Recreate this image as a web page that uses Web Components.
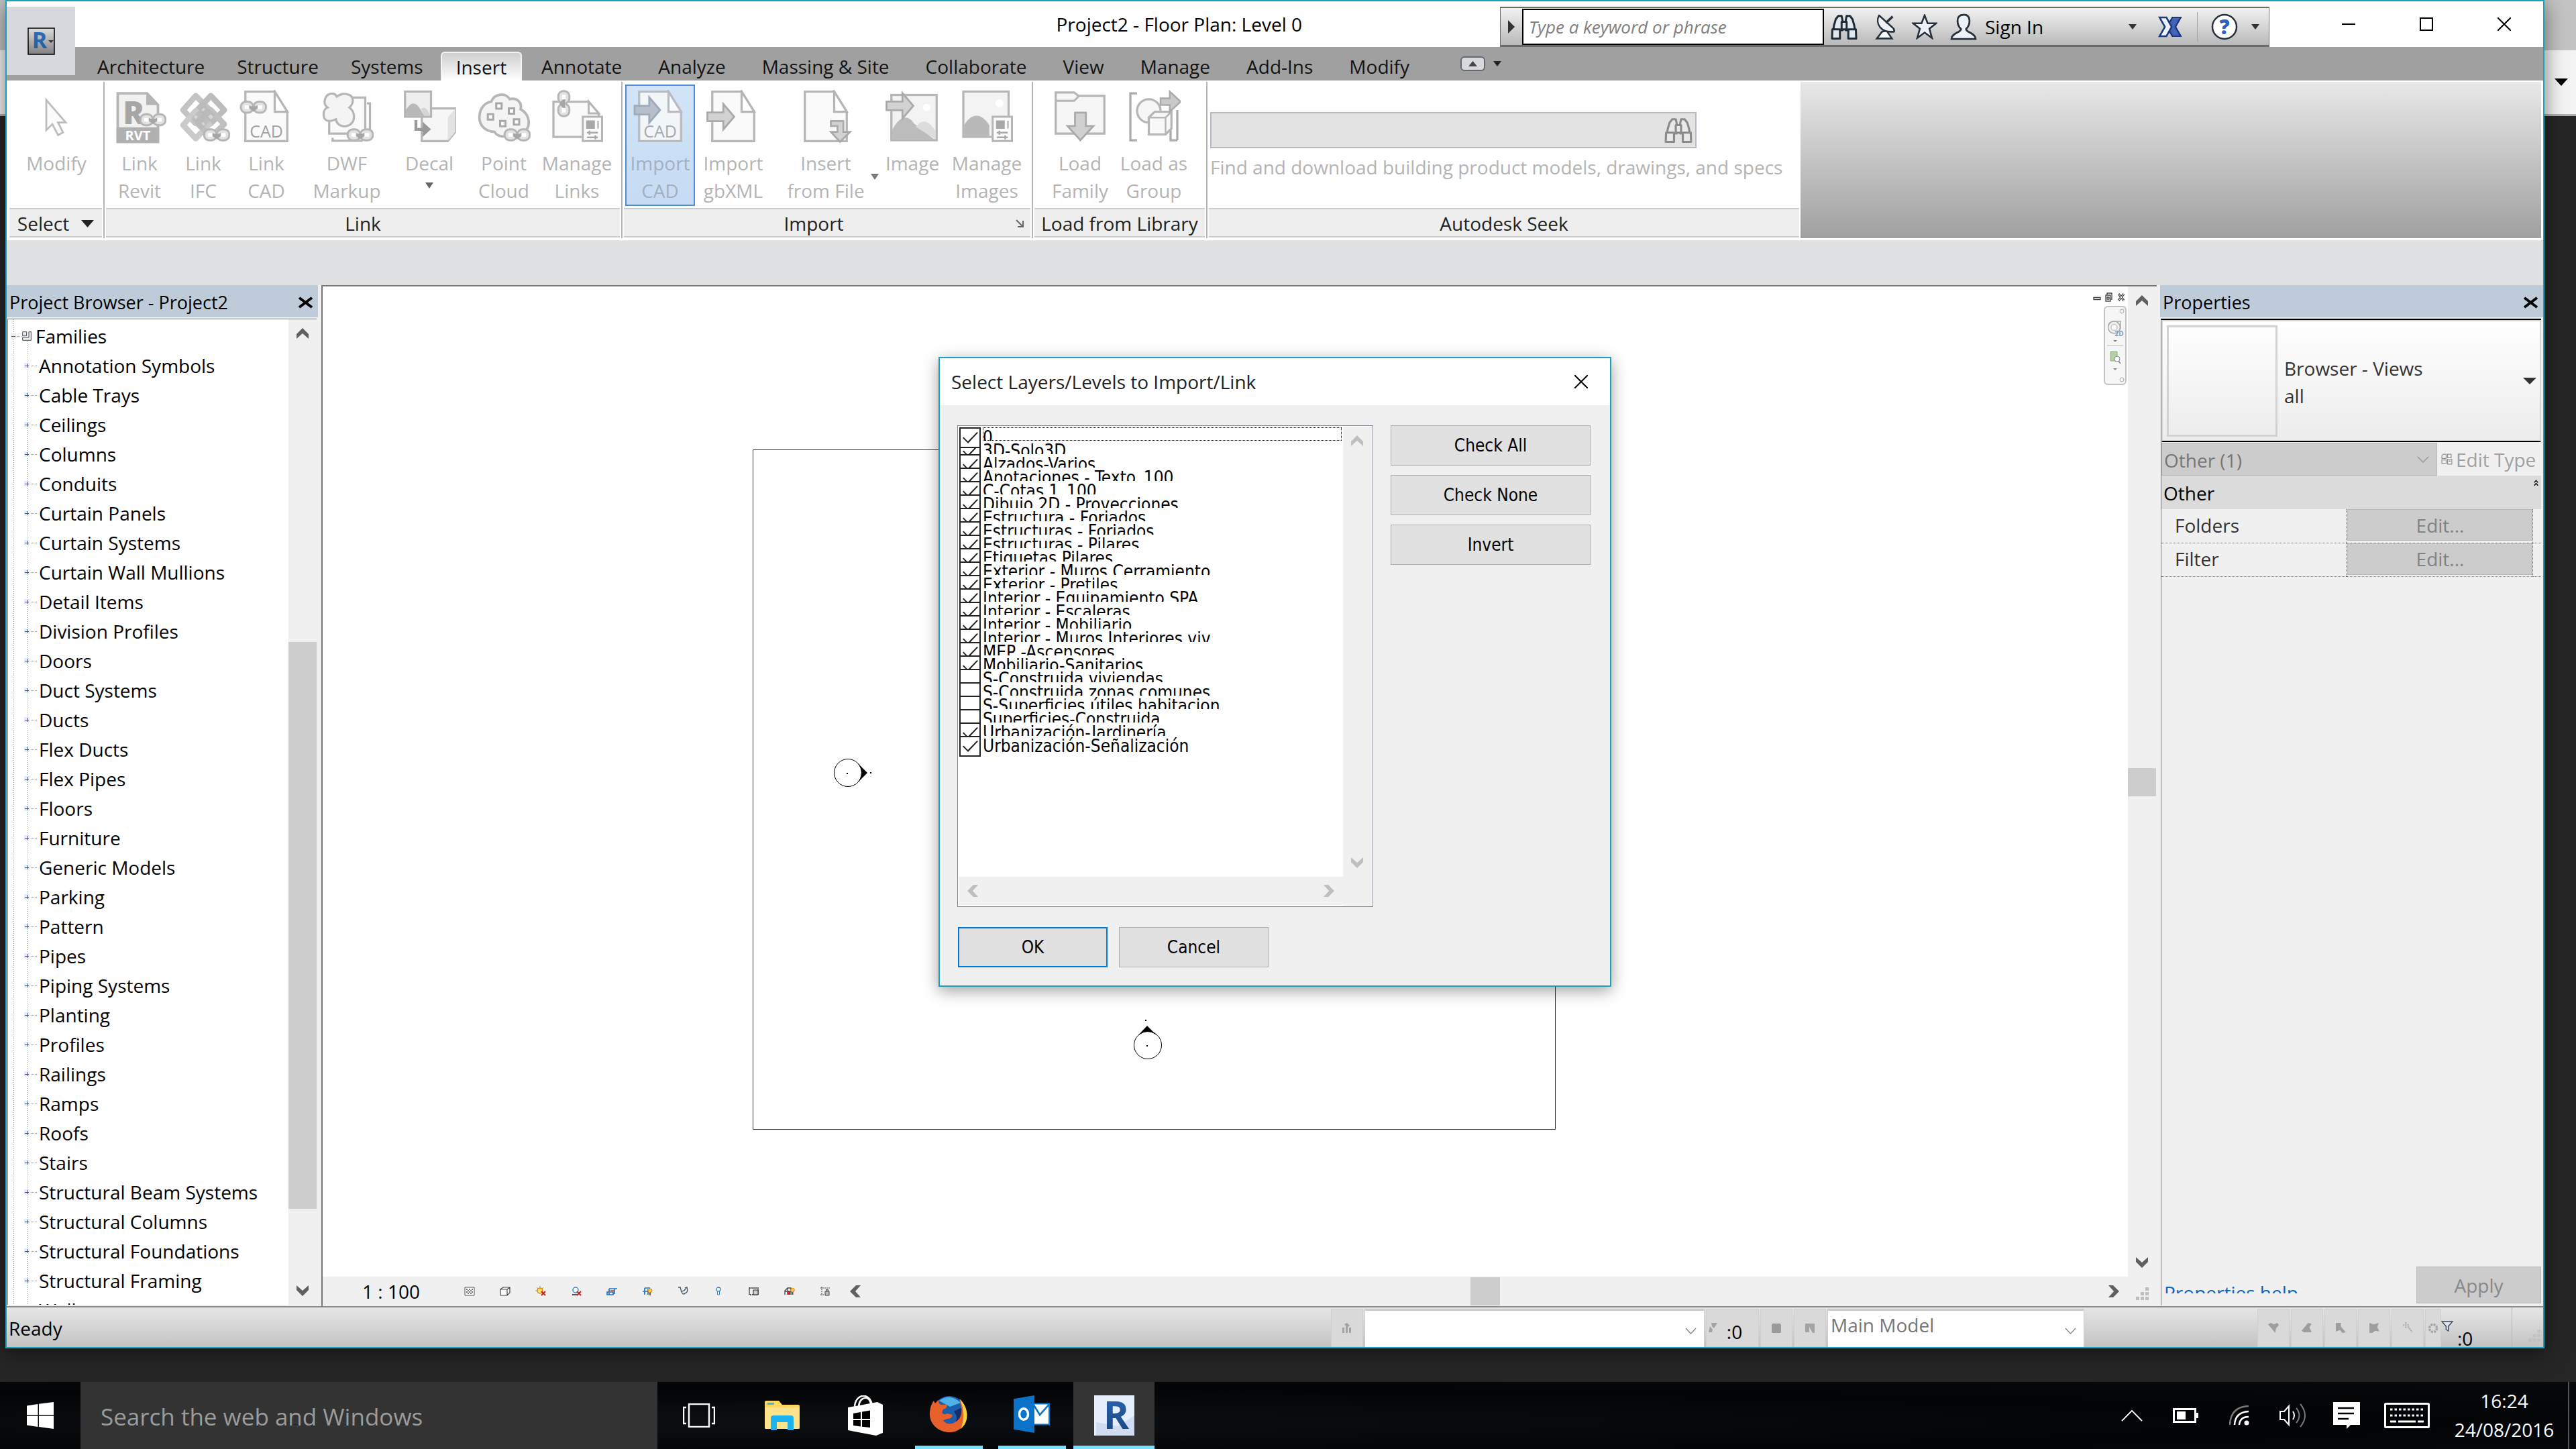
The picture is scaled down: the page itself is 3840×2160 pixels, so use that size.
<!DOCTYPE html>
<html lang="en">
<head>
<meta charset="utf-8">
<title>Project2 - Floor Plan: Level 0</title>
<style>
html,body{margin:0;height:100%}
body{font-family:"Open Sans","Noto Sans",sans-serif;font-size:28px;line-height:40px;color:#000;overflow:hidden;background:#262626}
</style>
</head>
<body>
<desk-top></desk-top>
<script>
const BASE=`*{box-sizing:border-box}:host{display:block;box-sizing:border-box}button,input,select{font:inherit;color:inherit;margin:0;padding:0;border:0;background:none;border-radius:0}svg{display:block}`;
function define(tag,css,html){
  customElements.define(tag,class extends HTMLElement{
    connectedCallback(){
      if(this.shadowRoot)return;
      const t=document.createElement('template');
      t.innerHTML=`<style>${BASE}${css}</style>`+(typeof html==='function'?html(this):html);
      this.attachShadow({mode:'open'}).append(t.content.cloneNode(true));
    }
  });
}

/* ---- icon library ---- */
const G='#b6b6b6';
const chain=(x,y,r='')=>`<g transform="translate(${x} ${y}) ${r}"><rect x="0" y="0" width="7.4" height="6.6" rx="3" fill="#e2e2e2" stroke="${G}" stroke-width="1.2"/><rect x="7.6" y="0" width="7.4" height="6.6" rx="3" fill="#e2e2e2" stroke="${G}" stroke-width="1.2"/><rect x="2.2" y="2.2" width="2.8" height="2.200" fill="#fff"/><rect x="10" y="2.2" width="2.8" height="2.200" fill="#fff"/><path d="M5 2.200q2.500 1.200 5 0v1.800l-2.500 2-2.500-2z" fill="#a6a6a6"/></g>`;
const page=`<path d="M3.5 1h17.500l7.500 12V30.500H3.5z" fill="#fafafa" stroke="${G}" stroke-width="1.3"/><path d="M21 1v12H28.500z" fill="#fff" stroke="${G}" stroke-width="1.3"/>`;
const cad=`<text x="16" y="28.500" font-family="Open Sans" font-size="10" font-weight="400" text-anchor="middle" fill="#a2a2a2">CAD</text>`;
const arrowR=(x,y)=>`<path d="M${x} ${y-2.6}h9.5v-5l6.500 7.600-6.500 7.600v-5H${x}z" fill="#d2d2d2" stroke="#aaa" stroke-width="1.1"/>`;
const sheet=`<rect x="19.500" y="16" width="11.500" height="14.500" fill="#fafafa" stroke="${G}" stroke-width="1.2"/><rect x="21.500" y="18.200" width="5.200" height="5" fill="#a8a8a8"/><path d="M28.600 18.400v4.600" stroke="#bbb"/><path d="M22 25.500h6.500M22 28.300h6.500M23.500 24.300v2.400M27 27.100v2.400" stroke="#a8a8a8" stroke-width="1"/>`;
const rlogo=(id,a,b)=>`<defs><linearGradient id="${id}" x1="0" y1="0" x2="0" y2="1"><stop offset="0" stop-color="${a}"/><stop offset="1" stop-color="${b}"/></linearGradient></defs>`;
const binoc=(s,f)=>`<g fill="${f}" stroke="${s}" stroke-width="1.2" stroke-linejoin="round"><path d="M2 7 3 3.500 4.500 1.500h2L7 4v6H1.500zM9 4l.5-2.500h2L13 3.500 14 7l.5 3H9z"/><path d="M1 9.500h4.500v5.500H.8zM10.500 9.500H15l.2 5.500h-4.700z"/><path d="M6.500 5h3v4.500h-3z"/></g>`;
const ICONS={
 cursor:['0 0 32 32',`<path d="M10 6v18l3.600-3.600L17 27l3-1.600-3-6h4.600z" fill="#fbfbfb" stroke="#bdbdbd" stroke-width="1.100"/>`],
 revit:['0 0 32 32',`<path d="M3 2h17.500l6.500 7v22H3z" fill="#f1f1f1" stroke="${G}" stroke-width="1.500"/><path d="M20 1.500v7.500H27.500z" fill="#b4b4b4"/><text x="12.500" y="20.500" font-family="Open Sans" font-size="19" font-weight="800" text-anchor="middle" fill="#a6a6a6">R</text><rect x="2.300" y="22.300" width="25.400" height="9" fill="#b0b0b0"/><text x="15" y="29.800" font-family="Open Sans" font-size="8" font-weight="700" text-anchor="middle" fill="#fff">RVT</text>${chain(16.500,14.500)}`],
 ifc:['0 0 32 32',`<g fill="none" stroke="#c3c3c3" stroke-width="3.400" stroke-linejoin="round"><path d="M11.500 3.500l8 8-8 8.500L4 12z"/><path d="M20.500 3.500l8 8.500-8 8-8-8z" stroke="#bcbcbc"/><path d="M11.500 12.500l8 8-8 8.500-7.500-8z" stroke="#cacaca"/><path d="M20.500 12l8 8.500-8 7.500-8-8z" stroke="#c0c0c0"/></g><path d="M9 17l8-8 6 6-8 9z" fill="#b4b4b4" opacity=".55"/>${chain(16.500,23.500)}`],
 linkcad:['0 0 32 32',page+cad+chain(.800,7)],
 dwf:['0 0 32 32',`<path d="M7.500 28.500v1.800h18M28 8h1.800v19" fill="none" stroke="${G}" stroke-width="1.300"/><path d="M5.500 4.500h21.500v21.500H5.500z" fill="#fafafa" stroke="${G}" stroke-width="1.300"/><path d="M10 4C9 1.500 4.500 1.500 3.200 5c-1 2.600 0 4.500 1.300 5.500C1.500 11.500 1 18 5 18.500c2 .4 3-.5 4.500-1C10 22.500 18 23.500 20 18c1-4-.5-6-2.500-7.500C20.500 8 20 4 17.500 3 14.500 1.800 12 2.500 10 4z" fill="#f4f4f4" stroke="${G}" stroke-width="1.300"/>${chain(16.500,23.500)}`],
 decal:['0 0 32 32',`<path d="M11.500 16.500V11h20v14L27 30.500H11.500z" fill="#f6f6f6" stroke="${G}" stroke-width="1.300"/><path d="M27 16.500v14l4.500-5.500V11z" fill="#e2e2e2"/><rect x="1.500" y="1" width="15.500" height="15" fill="#eee" stroke="${G}" stroke-width="1.300"/><path d="M2 15.500V12q4-7 8-1.500l3 5z" fill="#b9b9b9"/><path d="M11 11.500q3-3 5.500 4H13z" fill="#d5d5d5"/><path d="M8 18v5.500h6" fill="none" stroke="#999" stroke-width="1.700"/><path d="M12 19l5 4.500-5 4.500z" fill="#999"/>`],
 cloud:['0 0 32 32',`<path d="M8.500 7c2-5 9-5.500 11-1.500 4.500-1 7.500 2 6.500 6 4.500 2.500 6 7.500 4 11.500-2 4-7 5-10 3.500-3.500 2-8 1.500-9.500-1.500C5 25 1 21 1.500 15.500 1.800 10.500 5 7.500 8.500 7z" fill="#f4f4f4" stroke="${G}" stroke-width="1.500"/><g fill="#fff" stroke="#a8a8a8" stroke-width="1.200"><rect x="11.500" y="8" width="3.200" height="3.200"/><rect x="19" y="11" width="3.200" height="3.200"/><rect x="6.500" y="14.500" width="3.200" height="3.200"/><rect x="13.800" y="18.500" width="3.200" height="3.200"/><rect x="22" y="17.500" width="3.200" height="3.200"/></g>${chain(16.500,23.500)}`],
 mlinks:['0 0 32 32',`<path d="M2 7h21l6 7v14H2z" fill="#fafafa" stroke="${G}" stroke-width="1.300"/><path d="M23 7v7h6z" fill="#fff" stroke="${G}" stroke-width="1.200"/>${chain(11.500,.700,'rotate(90)')}${sheet}`],
 importcad:['0 0 32 32',`<g opacity=".85">${page}${cad}</g><path d="M.8 9.400h8.700V4.400l6.500 7.600-6.500 7.600v-5H.8z" fill="#b6bfca" stroke="#9daab9" stroke-width="1.100"/>`],
 gbxml:['0 0 32 32',page+arrowR(.600,16)],
 insfile:['0 0 32 32',page+`<path d="M19 18.500h7.500v6.500h4L24.500 31l-5.500-6h4v-3.500H19z" fill="#d2d2d2" stroke="#aaa" stroke-width="1.100"/>`],
 image:['0 0 32 32',`<rect x="3.500" y="3" width="27" height="27" fill="#f3f3f3" stroke="${G}" stroke-width="1.300"/><path d="M4 29.500V24c4-8 9-10 13-4l12 9.500z" fill="#bcbcbc"/><path d="M18 22c4-5 8-4 12 3v4.500z" fill="#dcdcdc"/><circle cx="24.500" cy="10.500" r="2.200" fill="#fff"/>${arrowR(.600,9.500)}`],
 mimages:['0 0 32 32',`<rect x="2" y="1" width="27" height="27" fill="#f3f3f3" stroke="${G}" stroke-width="1.300"/><path d="M2.500 27.500V21c4-7 10-8 15 0v6.500z" fill="#b9b9b9"/><circle cx="23.500" cy="8" r="2.400" fill="#fff"/>${sheet}`],
 lfamily:['0 0 32 32',`<path d="M1.500 1.500h11l2.500 2h15.500V26H1.500z" fill="#f6f6f6" stroke="${G}" stroke-width="1.300"/><path d="M1.500 6.500h11l3-3" fill="none" stroke="${G}" stroke-width="1.200"/><path d="M13 13.500h6.500v8H24L16.200 30 8.500 21.500H13z" fill="#d0d0d0" stroke="#aaa" stroke-width="1.100"/>`],
 lgroup:['0 0 32 32',`<path d="M6 2H2v28h4M26 18v12h4M30 12v18" fill="none" stroke="#ababab" stroke-width="1.300"/><circle cx="13" cy="12.500" r="7" fill="#f6f6f6" stroke="${G}" stroke-width="1.300"/><path d="M13 16.500l3.500-3.500h10v10l-3.500 3.500H13z" fill="#f8f8f8" stroke="${G}" stroke-width="1.300"/><path d="M13 16.500h10v10M23 16.500l3.500-3.500" fill="none" stroke="${G}"/><path d="M20 5h5.500V1l6.500 6-6.500 6V9H20z" fill="#c9c9c9" stroke="#aaa"/>`],
 down:['0 0 10 8',`<path d="M0 0h10L5 8z" fill="currentColor"/>`],
 right:['0 0 8 16',`<path d="M0 0l8 8-8 8z" fill="currentColor"/>`],
 launch:['0 0 12 12',`<path d="M1 1l9 9M11 2v9H3" fill="none" stroke="#666" stroke-width="2"/>`],
 binoc:['0 0 16 16',binoc('#1f2c38','#e3e8ee')],
 binocg:['0 0 16 16',binoc('#8b8b8b','#e9e9e9')],
 dish:['0 0 16 16',`<path d="M6.500 11l-3.500 4.300h10L9.500 10.500z" fill="#fff" stroke="#27323d" stroke-width="1.100"/><path d="M4.500.800C1.500 6 6 12 14.500 11q.3-1.500-1-2.500z" fill="#eef1f6" stroke="#27323d" stroke-width="1.100" stroke-linejoin="round"/><path d="M9 5.500l4.500-4" stroke="#27323d" stroke-width="1.500"/>`],
 star:['0 0 16 16',`<path d="M8 .8l1.900 5h5.300l-4.200 3.400 1.600 5.800L8 11.600 3.400 15 5 9.200.8 5.800h5.300z" fill="#eef1f6" stroke="#27323d" stroke-width="1.100"/>`],
 person:['0 0 16 16',`<path d="M8 .800c-5 0-4 6.200-1.500 8.500C6.500 11.500 1 11.500.800 15.200h14.400C15 11.500 9.500 11.500 9.500 9.300 12 7 13 .800 8 .800z" fill="#eef1f8" stroke="#27323d" stroke-width="1.100"/>`],
 exch:['0 0 16 16',`<path d="M9.500 1H15l-3.500 7L15 15H9.500L6 8z" fill="#4464b8" stroke="#1b3a80" stroke-width="1.100"/><path d="M1 1h4.500L9 8l-3.500 7H1l3.500-7z" fill="#eef2fb" stroke="#1b3a80" stroke-width="1.200"/>`],
 help:['0 0 16 16',`<circle cx="8" cy="8" r="7.200" fill="#fff" stroke="#27323d" stroke-width="1"/><text x="8" y="12.300" font-family="Open Sans" font-size="12" font-weight="800" text-anchor="middle" fill="#2b5fc0">?</text>`],
 min:['0 0 20 20',`<path d="M0 10h20" stroke="#000" stroke-width="2"/>`],
 max:['0 0 20 20',`<path d="M1 1h18v18H1z" fill="none" stroke="#000" stroke-width="2"/>`],
 x:['0 0 20 20',`<path d="M0 0l20 20M20 0L0 20" stroke="#000" stroke-width="2"/>`],
 xb:['0 0 20 20',`<path d="M1 2l18 16M19 2L1 18" stroke="#000" stroke-width="4"/>`],
 toggle:['0 0 37 22',`<rect x="1" y="1" width="35" height="20" rx="5" fill="#d8dade" stroke="#666a70" stroke-width="2"/><path d="M12 15l6.500-8 6.500 8z" fill="#444"/>`],
 cu:['0 0 18 16',`<path d="M0 9 9 0l9 9v7L9 8l-9 8z" fill="currentColor"/>`],
 cd:['0 0 18 16',`<path d="M0 7l9 9 9-9V0L9 8 0 0z" fill="currentColor"/>`],
 cl:['0 0 16 18',`<path d="M9 0 0 9l9 9h7L8 9l8-9z" fill="currentColor"/>`],
 cr:['0 0 16 18',`<path d="M7 0l9 9-9 9H0l8-9-8-9z" fill="currentColor"/>`],
 thin:['0 0 18 10',`<path d="M1 1l8 8 8-8" fill="none" stroke="currentColor" stroke-width="1.500"/>`],
 fam:['0 0 14 14',`<path d="M.700.700h6v6h-6zM.700 9v4.300h12.600V.700H10v8.300z" fill="#eee" stroke="#444a55" stroke-width="1"/>`],
 grip:['0 0 20 20',`<path d="M14 0h5v5h-5zM7 7h5v5H7zM14 7h5v5h-5zM0 14h5v5H0zM7 14h5v5H7zM14 14h5v5h-5z" fill="#bdbdbd"/>`],
 v1:['0 0 16 16',`<path d="M1 2h14v12H1z" fill="#fff" stroke="#555"/><path d="M3 4h2v2H3zM7 4h2v2H7zM11 4h2v2h-2zM5 6h2v2H5zM9 6h2v2H9zM3 8h2v2H3zM7 8h2v2H7zM11 8h2v2h-2zM5 10h2v2H5zM9 10h2v2H9z" fill="#777"/>`],
 v2:['0 0 16 16',`<path d="M1 5l4-3h10v8l-4 4H1zM1 5h10v9M11 5l4-3" fill="#fff" stroke="#444" stroke-width="1.200"/>`],
 v3:['0 0 16 16',`<circle cx="7" cy="7" r="4" fill="#ffe07a" stroke="#d98a00" stroke-width="1.500"/><path d="M7 0v2M0 7h2M2 2l2 2M12 2l-2 2" stroke="#d98a00"/><path d="M9 8l6 6M15 8l-6 6" stroke="#c3271d" stroke-width="2"/>`],
 v4:['0 0 16 16',`<circle cx="7" cy="6" r="4" fill="#fff" stroke="#3b85cf" stroke-width="1.500"/><path d="M2 13h7" stroke="#555" stroke-width="2"/><path d="M9 8l6 6M15 8l-6 6" stroke="#c3271d" stroke-width="2"/>`],
 v5:['0 0 16 16',`<path d="M1 9h9v4H1zM4 4h12M4 4v9M12 4v8" fill="none" stroke="#2172c4" stroke-width="1.700"/><path d="M6 7h5" stroke="#c3271d" stroke-width="1.500"/>`],
 v6:['0 0 16 16',`<path d="M1 8h8M4 3h8M4 3v10M9 5v8" fill="none" stroke="#2172c4" stroke-width="1.700"/><circle cx="12" cy="7" r="3" fill="#ffc94d" stroke="#d98a00"/><path d="M12 10v4" stroke="#555" stroke-width="2"/>`],
 v7:['0 0 16 16',`<path d="M1 2h3l2 7M6 9q3 5 5 2 3-1 4-4l-1-5-3 1M6 8l4-1 2-3" fill="none" stroke="#4a5a6a" stroke-width="1.400"/>`],
 v8:['0 0 16 16',`<circle cx="8" cy="5" r="3" fill="#fff" stroke="#2d7fd0" stroke-width="1.300"/><path d="M6.500 8h3v5h-3z" fill="#fff" stroke="#2d7fd0"/>`],
 v9:['0 0 16 16',`<path d="M1 3h13v10H1z" fill="none" stroke="#222" stroke-width="1.500" stroke-dasharray="2 1"/><path d="M7 6h7v7H7z" fill="#ccc" stroke="#222"/>`],
 v10:['0 0 16 16',`<path d="M1 13V7l4-4h5v10M5 3v10M1 8h9" fill="none" stroke="#444" stroke-width="1.300"/><path d="M5 8h4v5H5z" fill="#c3271d"/><circle cx="12.500" cy="6" r="2.800" fill="#ffc94d" stroke="#d98a00"/><path d="M12.500 9v4" stroke="#555" stroke-width="2"/>`],
 v11:['0 0 16 16',`<path d="M1 3h14M3 1v13M1 13h6" fill="none" stroke="#444" stroke-dasharray="2 1"/><path d="M8 8h6v6H8zM9.500 8V5.500h3V8" fill="#bbb" stroke="#444"/>`],
 s0:['0 0 16 16',`<path d="M1 7h3v8H1zM6 4h3v11H6zM11 7h3v8h-3zM4 2l4-2 4 4-4 3z" fill="#a3a3a3"/>`],
 s1:['0 0 16 16',`<path d="M5 1h9l-5 8-3-3zM1 15l2-9 4 5-1 4z" fill="#a3a3a3"/>`],
 s2:['0 0 16 16',`<rect x="1" y="1" width="14" height="14" rx="2" fill="#9a9a9a"/>`],
 s3:['0 0 16 16',`<path d="M1 1h14v14h-3L7 6v8H1z" fill="#a3a3a3"/>`],
 f1:['0 0 16 16',`<path d="M0 3l4-2 4 2 5-2 2 3-4 5-1 6-4-5z" fill="#9e9e9e"/>`],
 f2:['0 0 16 16',`<path d="M0 12l9-11 5 1-3 5 3 7H3z" fill="#9e9e9e"/>`],
 f3:['0 0 16 16',`<path d="M1 1h7v5l7 8-5 1-3-4-6 2z" fill="#9e9e9e"/>`],
 f4:['0 0 16 16',`<path d="M1 1l6 2 7-2-2 6 3 6-6-1-4 3H1z" fill="#9e9e9e"/>`],
 f5:['0 0 16 16',`<path d="M1 4h8M5 0v8M8 6l6 8" fill="none" stroke="#a8a8a8" stroke-width="2" stroke-dasharray="2 1"/>`],
 f6:['0 0 16 16',`<circle cx="8" cy="8" r="5.500" fill="none" stroke="#a5a5a5" stroke-width="3.500" stroke-dasharray="3 1.300"/>`],
 funnel:['0 0 16 16',`<path d="M1 1h14L9.500 8v7L6.500 13V8z" fill="#dfe6f2" stroke="#3c4656" stroke-width="1.300"/>`],
 et:['0 0 16 16',`<path d="M1 3l2-2h4v6H1zM9 1h5v5H9zM1 9h6v5H1zM9 8h6v7H9z" fill="none" stroke="#8f8f8f" stroke-width="1.100"/><path d="M10.500 10h3v1.500h-3z" fill="#8f8f8f"/>`],
 dbl:['0 0 10 16',`<path d="M1 7l4-5 4 5M1 14l4-5 4 5" fill="none" stroke="#000" stroke-width="2"/>`],
 win:['0 0 40 40',`<path d="M0 5.500 16.500 3v16.300H0zM18 2.800 40 0v19.300H18zM0 20.700h16.500V37L0 34.500zM18 20.700h22V40l-22-3z" fill="#fff"/>`],
 task:['0 0 48 36',`<path d="M9 1h30v34H9zM5 6H1v24h4M43 6h4v24h-4" fill="none" stroke="#fff" stroke-width="2.400"/>`],
 folder:['0 0 52 44',`<path d="M0 2q0-2 2-2h19l5 6h24q2 0 2 2v32q0 2-2 2H2q-2 0-2-2z" fill="#ffd75e"/><path d="M0 10h52v30q0 2-2 2H2q-2 0-2-2z" fill="#ffe38a"/><path d="M4 3h10v3H4z" fill="#3fb8e8"/><path d="M9 44V26q0-4 4-4h26q4 0 4 4v18h-9V32H18v12z" fill="#1cb4f0"/>`],
 store:['0 0 52 60',`<path d="M10 18C10-2 32-6 36 14M16 17C17 0 34 0 34 14" fill="none" stroke="#fff" stroke-width="2.500"/><path d="M0 18l44-8 8 4v42l-10 4-42-8z" fill="#fff"/><path d="M8 27l11-2v10H8zM21 24.600 33 22.500V35H21zM8 37h11v9.500L8 45zM21 37h12v11l-12-1.300z" fill="#000"/>`],
 ff:['0 0 56 56',`<circle cx="29" cy="26" r="25" fill="#1a5fae"/><path d="M14 8q16-12 32 3l-16 6z" fill="#4fb3ea"/><path d="M36 24q10 12-4 24l16-8V18z" fill="#1b2b66"/><path d="M44 8c16 14 14 38-4 45C22 60 0 48 0 28 0 18 3 12 6 8l2 4 5-5q0 6 4 7l8 0q2 5-5 7l-2 5q4 4 8 1l8 2q-1 6-8 6-6 2-6 3 8 8 18 2c10-6 12-18 6-32z" fill="#e8602c"/><path d="M44 5c14 12 16 34 2 45 6-14 6-30-2-45z" fill="#ffd23c"/>`],
 outlook:['0 0 54 54',`<path d="M28 12h25v30H28z" fill="#fff" stroke="#0a72c8" stroke-width="2"/><path d="M30 14l9 14 14-15" fill="none" stroke="#0a72c8" stroke-width="2.500"/><path d="M0 5l31-5v54L0 49z" fill="#0a72c8"/><ellipse cx="15" cy="27" rx="6.500" ry="8" fill="none" stroke="#fff" stroke-width="3.500"/>`],
 rbig:['0 0 60 60',rlogo('rb','#2a6ab8','#1c4379')+`<rect width="60" height="60" fill="#e6eefb"/><path d="M36 46l24-16v30H3V40z" fill="#cfdcf1"/><text x="33" y="50" font-family="Open Sans" font-size="58" font-weight="700" text-anchor="middle" fill="url(#rb)">R</text>`],
 rsmall:['0 0 41 41',rlogo('rs','#2c74c4','#1f5a9a')+`<defs><linearGradient id="rg" x1="0" y1="0" x2="0" y2="1"><stop offset="0" stop-color="#ddd"/><stop offset="1" stop-color="#808080"/></linearGradient></defs><rect x="1" y="1" width="39" height="39" fill="url(#rg)" stroke="#000" stroke-width="1.500"/><text x="18" y="31" font-family="Open Sans" font-size="34" font-weight="700" text-anchor="middle" fill="url(#rs)">R</text><path d="M31 19h8l-4 4z" fill="#333"/>`],
 up:['0 0 32 18',`<path d="M1 17 16 1l15 16" fill="none" stroke="#fff" stroke-width="2"/>`],
 batt:['0 0 38 22',`<path d="M1.500 1.500h32v19h-32z" fill="none" stroke="#fff" stroke-width="3"/><path d="M6 5h13v12H6zM35 7h3v8h-3z" fill="#fff"/>`],
 wifi:['0 0 30 30',`<path d="M1 29Q2 2 29 1" fill="none" stroke="#777" stroke-width="2.500"/><path d="M8 29Q9 10 29 9M15 29q1-12 14-12" fill="none" stroke="#fff" stroke-width="2.500"/><circle cx="26" cy="26" r="3.500" fill="#fff"/>`],
 vol:['0 0 40 36',`<path d="M1 12h6l7-8v28l-7-8H1z" fill="none" stroke="#fff" stroke-width="2"/><path d="M20 12q4 6 0 12" fill="none" stroke="#fff" stroke-width="2"/><path d="M25 7q9 11 0 22M31 1q14 17 0 34" fill="none" stroke="#777" stroke-width="2"/>`],
 note:['0 0 40 40',`<path d="M0 0h40v34H26l-6 6v-6H0z" fill="#fff"/><path d="M7 9h24M7 17h24M7 25h16" stroke="#000" stroke-width="2.500"/>`],
 kbd:['0 0 68 38',`<rect x="1.500" y="1.500" width="65" height="35" rx="1" fill="none" stroke="#fff" stroke-width="3"/><path d="M9 10h50M9 19h50" stroke="#fff" stroke-width="3" stroke-dasharray="3.500 3"/><path d="M9 28h9M21 28h26M50 28h9" stroke="#fff" stroke-width="3"/>`],
 nav:['0 0 34 118',`<rect x="1" y="1" width="32" height="116" rx="5" fill="#f6f6f6" stroke="#c3c3c3" stroke-width="2"/><circle cx="27" cy="8" r="3" fill="none" stroke="#aaa"/><path d="M7 32q-1-9 9-9h9v12" fill="#eee" stroke="#aaa" stroke-width="1.500"/><circle cx="15.500" cy="32" r="9" fill="#eee" stroke="#aaa" stroke-width="1.500"/><circle cx="15.500" cy="32" r="4.500" fill="#fff" stroke="#aaa"/><text x="23" y="45" font-size="10" font-family="Open Sans" font-weight="700" text-anchor="middle" fill="#7f9fc4">2D</text><path d="M14 51h6l-3 3z" fill="#888"/><path d="M5 59h24" stroke="#bbb"/><path d="M10 68h10v14H10z" fill="#b7cfa4" stroke="#93b07d"/><circle cx="20" cy="79" r="4" fill="#fff" stroke="#888"/><path d="M22 82l3 4" stroke="#888" stroke-width="1.500"/><path d="M14 93h6l-3 3z" fill="#888"/><circle cx="27" cy="110" r="3" fill="none" stroke="#aaa"/>`],
 mdi:['0 0 48 16',`<path d="M1 8.500h10v3H1zM19 5h7v9h-7zM21 5V2h7v9h-2M21 8h3v3h-3z" fill="none" stroke="#444" stroke-width="1.300"/><path d="M38 3l8 10M46 3l-8 10" stroke="#444" stroke-width="3.500"/><path d="M38 3l8 10M46 3l-8 10" stroke="#fff" stroke-width="1"/>`]
};
define('ui-icon',`:host{width:var(--w,16px);height:var(--h,var(--w,16px));flex:none}svg{width:100%;height:100%}`,
 e=>{const i=ICONS[e.getAttribute('name')];return `<svg viewBox="${i[0]}" preserveAspectRatio="none" aria-hidden="true">${i[1]}</svg>`});
const ic=(n,w,h,x='')=>`<ui-icon name="${n}" style="--w:${w}px;--h:${h||w}px;${x}"></ui-icon>`;

/* ---- scroll bar: arrow, track, thumb, track, arrow ---- */
define('scroll-bar',`:host{display:flex;background:#f0f0f0;color:#606060;width:42px;flex-direction:column;flex:none}:host([dir=h]){flex-direction:row;width:auto;height:42px}:host([off]){color:#bfbfbf}
button{flex:none;width:42px;height:42px;display:flex;align-items:center;justify-content:center}i{background:#cdcdcd}`,
 e=>{const h=e.getAttribute('dir')==='h',t=(e.getAttribute('track')||'1 0 0').split(' ');
 return `<button aria-label="Back">${h?ic('cl',16,18):ic('cu',18,16)}</button><span style="flex:${t[0]}"></span><i style="flex:${t[1]}"></i><span style="flex:${t[2]}"></span><button aria-label="Forward">${h?ic('cr',16,18):ic('cd',18,16)}</button>`});

/* ---- title bar ---- */
define('info-center',`:host{display:flex;align-items:center;height:60px;width:1147px;border:solid #6b6b6b;border-width:2px 1px 3px;background:linear-gradient(#f2f2f2,#b9b9b9);color:#333;flex:none}
button{display:flex;align-items:center;justify-content:center;height:100%;flex:none}
input{width:450px;height:54px;border:2px solid #000;background:#fff;padding:0 8px;font-size:26px;font-style:italic;flex:none}input::placeholder{color:#808080;opacity:1}
.i{width:60px}.n{width:32px}.s{width:264px;justify-content:flex-start;color:#000;padding-left:8px}.s span{margin-left:12px}.w{width:80px}hr{width:1px;height:44px;border:0;margin:0;background:#a5a5a5}`,
 `<button class="n" aria-label="Collapse">${ic('right',10,20)}</button><input aria-label="Search" placeholder="Type a keyword or phrase"><button class="i" aria-label="Find">${ic('binoc',40)}</button><button class="i" aria-label="Subscription">${ic('dish',36,38)}</button><button class="i" aria-label="Favorites">${ic('star',38)}</button><button class="s">${ic('person',40)}<span>Sign In</span></button><button class="n" aria-label="Account">${ic('down',12,8)}</button><button class="w" aria-label="Exchange">${ic('exch',36,32)}</button><hr><button class="w" aria-label="Help">${ic('help',40)}</button><button aria-label="Help menu">${ic('down',12,8)}</button>`);
define('title-bar',`:host{display:flex;height:68px;background:#fff;align-items:flex-end}h1{flex:1;margin:0;font:inherit;text-align:right;padding:0 295px 0 0;height:54px}
nav{display:flex;margin-left:60px;height:68px;flex:none}nav button{width:116px;display:flex;align-items:center;justify-content:center}`,
 `<h1>Project2 - Floor Plan: Level 0</h1><info-center></info-center><nav><button aria-label="Minimize">${ic('min',20)}</button><button aria-label="Maximize">${ic('max',20)}</button><button aria-label="Close">${ic('x',20)}</button></nav>`);
define('ribbon-tabs',`:host{display:flex;height:50px;background:#a0a0a0;padding:7px 0 0 9px;color:#141414}
button{padding:0 24px;height:43px;line-height:44px}button.on~button{padding:0 27px}button.on{margin:0 2px;padding:0 21px;border:2px solid #f4f4f4;border-bottom:0;border-radius:6px 6px 0 0;background:linear-gradient(#cfcfcf,#fff);line-height:40px}
button.on~.t{margin-left:49px;padding:0;display:flex;gap:12px;align-items:center;line-height:0;height:36px;color:#222}`,
 ()=>['Architecture','Structure','Systems','Insert','Annotate','Analyze','Massing & Site','Collaborate','View','Manage','Add-Ins','Modify'].map(t=>`<button${t==='Insert'?' class="on"':''}>${t.replace('&','&amp;')}</button>`).join('')+`<button class="t" aria-label="Minimize ribbon">${ic('toggle',37,22)}${ic('down',12,8)}</button>`);

/* ---- ribbon ---- */
define('ribbon-button',`:host{width:var(--bw);flex:none;height:181px}
button{width:100%;height:100%;display:flex;flex-direction:column;align-items:center;color:#b4b4b4;white-space:nowrap;line-height:41px;position:relative;padding-top:6px;text-align:center;border:2px solid transparent}
button>span{margin-top:9px;display:flex;flex-direction:column;align-items:center}
:host([on]) button{background:linear-gradient(#d2e4f7,#c5dcf4);border-color:#4e90cf;color:#a3b0bf}
.side{position:absolute;right:0;top:122px;color:#777}`,
 e=>{const m=e.getAttribute('menu');return `<button>${ic(e.getAttribute('icon'),80)}<span>${e.getAttribute('label').split('|').map(s=>`<span>${s}</span>`).join('')}${m==='below'?ic('down',12,9,'margin-top:8px;color:#666'):''}</span>${m==='side'?`<span class="side">${ic('down',12,9)}</span>`:''}</button>`});
define('ribbon-panel',`:host{display:flex;flex-direction:column;width:var(--pw);flex:none;border-right:2px solid #b5b5b5;padding:0 2px}
.b{height:188px;display:flex;padding:4px 2px 0;flex:none}.f{height:44px;background:#eee;border:solid #ccc;border-width:2px 0;display:flex;align-items:center;justify-content:center;gap:18px;line-height:40px;color:#222;padding-top:2px}
.n{flex:1;text-align:center}.f ui-icon+ui-icon{margin-right:10px}:host([menu]) .n{flex:none}.l{margin-right:10px}`,
 e=>`<div class="b"><slot></slot></div><div class="f"><span class="n">${e.getAttribute('name')}</span>${e.hasAttribute('menu')?ic('down',19,11):''}${e.hasAttribute('launch')?`<span class="l">${ic('launch',12)}</span>`:''}</div>`);
define('seek-box',`:host{padding-top:41px}.s{display:flex;align-items:center;width:725px;height:54px;border:2px solid #b5bac2;background:#e3e3e3;padding-right:4px}input{flex:1;height:100%}p{margin:8px 0 0;color:#b4b4b4;white-space:nowrap}`,
 `<div class="s"><input disabled aria-label="Search Autodesk Seek">${ic('binocg',42,40)}</div><p>Find and download building product models, drawings, and specs</p>`);
define('ribbon-bar',`:host{display:flex;height:239px;background:#fff;padding:2px 3px 3px 2px;border-bottom:1px solid #e8e8e8}
.fill{flex:1;background:linear-gradient(#e8e8e8,#a0a0a0)}ribbon-panel:last-of-type{border-right:0}`,
 ()=>{const b=(i,l,w,x='')=>`<ribbon-button icon="${i}" label="${l}" style="--bw:${w}px" ${x}></ribbon-button>`;
 return `<ribbon-panel name="Select" menu style="--pw:144px">${b('cursor','Modify',136)}</ribbon-panel>
<ribbon-panel name="Link" style="--pw:772px">${b('revit','Link|Revit',96)}${b('ifc','Link|IFC',94)}${b('linkcad','Link|CAD',94)}${b('dwf','DWF|Markup',146)}${b('decal','Decal',100,'menu="below"')}${b('cloud','Point|Cloud',122)}${b('mlinks','Manage|Links',96)}</ribbon-panel>
<ribbon-panel name="Import" launch style="--pw:612px">${b('importcad','Import|CAD',104,'on')}${b('gbxml','Import|gbXML',114)}${b('insfile','Insert|from File',162,'menu="side"')}${b('image','Image',96)}${b('mimages','Manage|Images',126)}</ribbon-panel>
<ribbon-panel name="Load from Library" style="--pw:260px">${b('lfamily','Load|Family',132)}${b('lgroup','Load as|Group',88)}</ribbon-panel>
<ribbon-panel name="Autodesk Seek" style="--pw:884px"><seek-box></seek-box></ribbon-panel><div class="fill"></div>`});

/* ---- project browser ---- */
define('pane-title',`:host{display:flex;align-items:center;justify-content:space-between;height:48px;background:#becbd9;padding:3px 8px 0 4px;flex:none;font-size:27px}button{display:flex}`,
 `<slot></slot><button aria-label="Close">${ic('xb',21,18)}</button>`);
define('tree-item',`:host{height:44px;display:flex;align-items:center;white-space:nowrap;line-height:44px;flex:none}
.r{display:flex;align-items:center;margin-left:24px}.p{width:8px;height:8px;margin-right:2px;background:linear-gradient(#3a4f9a,#3a4f9a) 50% 50%/6px 1px no-repeat,linear-gradient(#3a4f9a,#3a4f9a) 50% 50%/1px 6px no-repeat,#ececec}
.d{width:9px;border-top:1px dotted #999;margin-right:3px}:host([root]) .r{margin-left:4px}:host([root]) .p{background:linear-gradient(#3a4f9a,#3a4f9a) 50% 50%/6px 1px no-repeat,#ececec}:host([root]) .d{width:6px;margin-right:1px}ui-icon{margin-right:6px}`,
 e=>`<div class="r"><span class="p"></span><span class="d"></span>${e.hasAttribute('root')?ic('fam',14,14):''}<slot></slot></div>`);
define('project-browser',`:host{display:flex;flex-direction:column;min-height:0}
.box{flex:1;margin:2px 2px 2px 1px;border:solid #777;border-width:1px 0 0 1px;display:flex;min-height:0;background:#fff}
.tree{flex:1;padding-top:3px;overflow:hidden;display:flex;flex-direction:column;background:repeating-linear-gradient(#999 0 1px,transparent 1px 3px) 8px 0/1px 100% no-repeat,repeating-linear-gradient(#999 0 1px,transparent 1px 3px) 28px 30px/1px 100% no-repeat}`,
 ()=>`<pane-title>Project Browser - Project2</pane-title><div class="box"><div class="tree"><tree-item root>Families</tree-item>${'Annotation Symbols,Cable Trays,Ceilings,Columns,Conduits,Curtain Panels,Curtain Systems,Curtain Wall Mullions,Detail Items,Division Profiles,Doors,Duct Systems,Ducts,Flex Ducts,Flex Pipes,Floors,Furniture,Generic Models,Parking,Pattern,Pipes,Piping Systems,Planting,Profiles,Railings,Ramps,Roofs,Stairs,Structural Beam Systems,Structural Columns,Structural Foundations,Structural Framing,Walls'.split(',').map(t=>`<tree-item>${t}</tree-item>`).join('')}</div><scroll-bar track="439 846 101"></scroll-bar></div>`);

/* ---- drawing view ---- */
define('drawing-view',`:host{display:flex;flex-direction:column;border:solid #777;border-width:2px 0 0 2px;min-height:0;background:#f0f0f0}
.c{flex:1;display:flex;min-height:0}.d{flex:1;background:#fff;position:relative;overflow:hidden}.d>svg{width:100%;height:100%}.o{position:absolute;top:8px;right:4px}.n{position:absolute;top:29px;right:2px}
.bar{height:44px;display:flex;align-items:center;flex:none}.bar b{font-weight:400;margin:0 66px 0 59px}.v{display:flex;gap:37px;margin-right:16px}scroll-bar{margin-right:1px}scroll-bar[dir=h]{flex:1}.g{width:42px;display:flex;justify-content:center;padding-top:8px}`,
 ()=>`<div class="c"><div class="d"><svg><g fill="none" stroke="#000"><path d="M641.500 243.500h1196v1013h-1196z" stroke="#333"/><circle cx="783" cy="725" r="20.500"/><circle cx="1230" cy="1131" r="20.500"/></g><path d="M797 710l15 15-15 15q12-15 0-30zM1215 1117l14-15 15 15q-14-12-29 0zM816 724h2v2h-2zM781 725h2v2h-2zM1226 1093h2v2h-2zM1228 1131h2v2h-2z"/></svg><span class="o">${ic('mdi',48,16)}</span><span class="n">${ic('nav',34,118)}</span></div><scroll-bar track="676 42 674"></scroll-bar></div>
<div class="bar"><b>1 : 100</b><div class="v">${[1,2,3,4,5,6,7,8,9,10,11].map(n=>ic('v'+n,16)).join('')}</div><scroll-bar dir="h" track="896 43 894"></scroll-bar><div class="g">${ic('grip',20)}</div></div>`);

/* ---- properties ---- */
define('properties-panel',`:host{display:flex;flex-direction:column;min-height:0;background:#f0f0f0}
.box{margin:2px 3px 1px 1px;border-left:1px solid #777;border-top:2px solid #000;flex:1;display:flex;flex-direction:column;min-height:0}
.type{display:flex;align-items:center;height:182px;border:2px solid #d6d6d6;border-bottom:2px solid #000;background:linear-gradient(#fff,#ececec);padding:0 5px 0 6px;text-align:left;color:#333;flex:none}
.type i{width:165px;height:166px;border:3px solid #d2d2d2;margin-right:10px}.type span{flex:1;line-height:41px;padding-top:3px}
.cat{display:flex;height:50px;padding-top:1px;align-items:stretch;flex:none}.sel{width:411px;display:flex;position:relative;color:#777}select{appearance:none;flex:1;background:#ccc;border:1px solid #b9b9b9;padding:2px 3px 0;opacity:1}.sel ui-icon{position:absolute;right:12px;top:20px;color:#999}
.cat button{display:flex;align-items:center;gap:5px;padding-left:6px;white-space:nowrap;color:#a0a0a0}
table{border-collapse:collapse;width:100%;table-layout:fixed;color:#333}th,td{font-weight:400;text-align:left;padding:0;height:50px}
thead th{background:#dbdbdb;color:#000;padding:2px 0 0}thead div{display:flex;justify-content:space-between;padding:0 4px 0 3px}tbody th{padding:0 0 2px 20px}tbody td,tbody th{border-bottom:1px dotted #777}tbody td{border-left:1px dotted #777;padding:0 0 2px 1px}td button{width:100%;height:47px;background:#ccc;border:1px solid #b9b9b9;color:#828282}
.f{margin-top:auto;display:flex;justify-content:space-between;padding-bottom:3px}.f a{color:#0a64c4;margin:23px 0 0 4px;height:17px;line-height:32px;overflow:hidden;text-decoration:none}.f button{width:186px;height:55px;background:#ccc;border:1px solid #bbb;color:#888}`,
 ()=>`<pane-title>Properties</pane-title><div class="box"><button class="type"><i></i><span>Browser - Views<br>all</span>${ic('down',20,10)}</button>
<div class="cat"><span class="sel"><select disabled aria-label="Category"><option>Other (1)</option></select>${ic('thin',18,10)}</span><button disabled>${ic('et',17,17)}Edit Type</button></div>
<table><colgroup><col><col style="width:278px"><col style="width:12px"></colgroup><thead><tr><th colspan="3"><div>Other${ic('dbl',7,10)}</div></th></tr></thead><tbody><tr><th>Folders</th><td><button disabled aria-label="Edit Folders">Edit...</button></td><td></td></tr><tr><th>Filter</th><td><button disabled aria-label="Edit Filter">Edit...</button></td><td></td></tr></tbody></table>
<div class="f"><a href="#help">Properties help</a><button disabled>Apply</button></div></div>`);

/* ---- status bar ---- */
define('status-bar',`:host{display:flex;height:61px;border-top:2px solid #8a8a8a;background:linear-gradient(#e6e6e6,#c3c3c3);align-items:stretch;flex:none;padding-left:3px}
.r{flex:1;line-height:62px}.t{display:flex;gap:2px;padding-top:2px}button{background:#d9d9d9;width:48px;display:flex;align-items:center;justify-content:center;border:1px solid #cfcfcf}
.c{position:relative;display:flex}.c ui-icon{position:absolute;right:12px;top:28px;color:#8a8a8a}select{appearance:none;background:#fff;color:#777;border:solid #cdcdcd;border-width:3px 1px 0;padding:0 4px 12px;opacity:1}
.z{width:79px;gap:12px;padding:10px 22px 0 0}.z ui-icon{margin-top:-12px}.q{margin-left:258px}.k{display:flex;gap:6px;width:106px;border-right:1px solid #b5b5b5}.k span{padding-top:26px}.k ui-icon{margin-top:20px}.g{width:46px;padding:33px 4px 0 24px}`,
 ()=>`<span class="r">Ready</span><div class="t"><button aria-label="Worksets">${ic('s0',16)}</button><span class="c"><select aria-label="Workset" style="width:507px"><option></option></select>${ic('thin',17,10)}</span><button class="z">${ic('s1',16)}:0</button><button aria-label="Design options">${ic('s2',16)}</button><button aria-label="Add to set">${ic('s3',16)}</button><span class="c"><select aria-label="Design option" style="width:383px"><option>Main Model</option></select>${ic('thin',17,10)}</span></div>
<div class="t q">${[1,2,3,4,5].map(n=>`<button aria-label="Selection ${n}">${ic('f'+n,17)}</button>`).join('')}<button aria-label="Background" style="width:24px">${ic('f6',16)}</button></div><div class="k">${ic('funnel',18,16)}<span>:0</span></div><div class="g">${ic('grip',19,19,'opacity:.7')}</div>`);

/* ---- dialog: rows are shorter than their labels, so each one covers the foot of the row before ---- */
define('layer-item',`:host{height:20px;position:relative}
label{display:flex;height:31px;line-height:31px;background:#fff;white-space:nowrap}
input{appearance:none;width:32px;height:31px;border:2px solid #222;background:#fff;flex:none;margin-right:3px;position:relative}
input:checked::before{content:"";position:absolute;left:3px;top:5px;width:23px;height:17px;background:#222;clip-path:polygon(0 52%,6% 44%,34% 82%,93% 0,100% 6%,35% 100%)}
:host([focused]) label{height:20px}:host([focused]) input{z-index:1}:host([focused]) .t{flex:1;overflow:hidden;outline:1px dotted #000;outline-offset:-1px;margin-right:2px}`,
 e=>`<label><input type="checkbox"${e.hasAttribute('off')?'':' checked'}><span class="t"><slot></slot></span></label>`);
define('layers-dialog',`:host{display:flex;flex-direction:column;border:2px solid #1ca0bb;background:#f0f0f0;box-shadow:0 6px 22px rgba(0,0,0,.38);width:1003px}
header{display:flex;justify-content:space-between;align-items:center;height:70px;background:#fff;padding:0 33px 0 17px;color:#222}header button{display:flex}
.m,.b{font-family:"DejaVu Sans Condensed","DejaVu Sans",sans-serif;font-size:26px}.m{font-stretch:condensed;display:flex;justify-content:space-between;padding:30px 29px 0 26px}
.list{width:620px;height:718px;border:1px solid #828790;background:#fff;padding:1px;display:grid;grid-template:1fr 43px/1fr 43px}.list>div{padding:1px 0 0 1px;overflow:hidden}
.s{display:flex;flex-direction:column;gap:14px;width:298px}.s button,.b button{height:60px;background:#e1e1e1;border:1px solid #adadad}
.b{display:flex;gap:17px;padding:30px 27px 27px}.b button{width:223px}.b .d{border:2px solid #0078d7}scroll-bar{width:43px}scroll-bar[dir]{width:auto}.corner{background:#f0f0f0}`,
 ()=>`<header><span>Select Layers/Levels to Import/Link</span><button aria-label="Close">${ic('x',20)}</button></header>
<div class="m"><div class="list"><div>${'0|3D-Solo3D|Alzados-Varios|Anotaciones - Texto_100|C-Cotas 1_100|Dibujo 2D - Proyecciones|Estructura - Forjados|Estructuras - Forjados|Estructuras - Pilares|Etiquetas Pilares|Exterior - Muros Cerramiento|Exterior - Pretiles|Interior - Equipamiento SPA|Interior - Escaleras|Interior - Mobiliario|Interior - Muros Interiores viv|MEP -Ascensores|Mobiliario-Sanitarios|S-Construida viviendas|S-Construida zonas comunes|S-Superficies útiles habitacion|Superficies-Construida|Urbanización-Jardinería|Urbanización-Señalización'.split('|').map((t,i)=>`<layer-item${i===0?' focused':''}${i>17&&i<22?' off':''}>${t}</layer-item>`).join('')}</div><scroll-bar off></scroll-bar><scroll-bar dir="h" off></scroll-bar><span class="corner"></span></div>
<div class="s"><button>Check All</button><button>Check None</button><button>Invert</button></div></div><div class="b"><button class="d">OK</button><button>Cancel</button></div>`);

/* ---- windows ---- */
define('app-window',`:host{display:flex;flex-direction:column;border:2px solid #1ca0bb;background:#f0f0f0;box-shadow:0 6px 30px rgba(0,0,0,.5);min-height:0}
.h{display:flex;background:#a0a0a0;height:118px;flex:none}.a{width:102px;padding:8px 0;background:linear-gradient(#fff 50%,#a0a0a0 50%);flex:none}.a button{width:102px;height:102px;background:#d6d8dd;display:flex;align-items:center;justify-content:center}.t{flex:1}
ribbon-bar{flex:none}.o{height:66px;background:#e0e1e3;flex:none}.m{flex:1;display:grid;grid-template-columns:464px 1fr 571px;grid-template-rows:100%;gap:5px;min-height:0}`,
 `<div class="h"><div class="a"><button aria-label="Application menu">${ic('rsmall',41)}</button></div><div class="t"><title-bar></title-bar><ribbon-tabs></ribbon-tabs></div></div><ribbon-bar></ribbon-bar><div class="o"></div><div class="m"><project-browser></project-browser><drawing-view></drawing-view><properties-panel></properties-panel></div><status-bar></status-bar>`);
define('task-bar',`:host{display:flex;height:100px;background:radial-gradient(ellipse at 30% 60%,#0c0f12,#030405 60%,#07090b);color:#fff;flex:none}
button{display:flex;align-items:center;justify-content:center;height:100px;flex:none}.s{width:120px}input{width:860px;background:#333;padding:4px 30px 0;font-size:35px;flex:none}input::placeholder{color:#9b9b9b;opacity:1}
.a{width:124px;padding:0 12px}.run,.on{flex-direction:column;justify-content:space-between;padding-top:20px}.run::after,.on::after{content:"";height:5px;width:101px;background:#76e0ff;flex:none}.on{background:#343434;width:121px}.on::after{width:121px}
.y{margin-left:auto;display:flex;align-items:center}.y button{width:80px}.y .k{width:100px}.c{text-align:center;line-height:43px;width:190px}.e{width:2px;height:100%;background:#555;margin-right:10px}`,
 `<button class="s" aria-label="Start">${ic('win',40)}</button><input aria-label="Search" placeholder="Search the web and Windows"><button class="a" aria-label="Task View">${ic('task',48,36)}</button><button class="a" aria-label="File Explorer">${ic('folder',52,44)}</button><button class="a" aria-label="Store">${ic('store',52,60)}</button><button class="a run" aria-label="Firefox">${ic('ff',56)}</button><button class="a run" aria-label="Outlook">${ic('outlook',54,56)}</button><button class="a on" aria-label="Revit">${ic('rbig',60)}</button>
<div class="y"><button aria-label="Show hidden icons">${ic('up',32,17)}</button><button aria-label="Battery">${ic('batt',38,22)}</button><button aria-label="Network">${ic('wifi',30,30)}</button><button aria-label="Volume">${ic('vol',40,36)}</button><button aria-label="Notifications">${ic('note',40,40)}</button><button class="k" aria-label="Keyboard">${ic('kbd',68,38)}</button><div class="c">16:24<br>24/08/2016</div><span class="e"></span></div>`);
define('desk-top',`:host{display:flex;flex-direction:column;height:100vh;position:relative;background:linear-gradient(#c4c4c4 75px,#f4f4f4 75px 170px,#b0b0b0 170px 173px,#262626 173px)}
app-window{flex:1;margin:0 47px 50px 8px}layers-dialog{position:absolute;left:1399px;top:532px}.d{position:absolute;right:12px;top:117px}`,
 `<span class="d">${ic('down',20,11)}</span><app-window></app-window><task-bar></task-bar><layers-dialog></layers-dialog>`);
</script>
</body>
</html>
